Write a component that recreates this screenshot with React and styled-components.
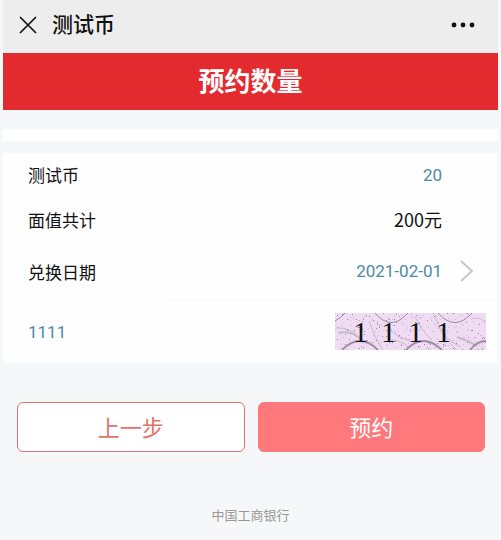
//react
import React, { useState } from 'react';
//css
import styled, { createGlobalStyle } from 'styled-components';

const DIGIT_X = [18, 46, 73, 101];

//captcha noise
const makeDots = (count) => {
  const dots = [];
  let seed = 11;
  const next = () => {
    seed = (seed * 16807) % 2147483647;
    return seed / 2147483647;
  };
  for (let i = 0; i < count; i++) {
    dots.push({ x: Math.floor(next() * 151), y: Math.floor(next() * 37), dark: next() > 0.65 });
  }
  return dots;
};
const dots = makeDots(280);

function Captcha() {
  return (
    <CaptchaSvg viewBox="0 0 151 37" role="img" aria-label="验证码">
      <rect width="151" height="37" fill="#f0dcf2" />
      {dots.map((d, i) => (
        <rect key={i} x={d.x} y={d.y} width="1" height="1" fill={d.dark ? '#9a82a8' : '#d3b3da'} />
      ))}
      <g fill="none" stroke="#c6bac9" strokeWidth="1">
        <path d="M2 15 Q14 14 24 24" />
        <path d="M4 20 Q16 17 27 27" strokeWidth="2" />
        <path d="M34 8 Q39 24 48 37" />
        <path d="M54 16 Q62 24 74 27" />
        <path d="M56 27 Q66 27 73 34" />
        <path d="M80 4 Q88 20 97 27" />
        <path d="M100 2 Q106 24 121 36" />
        <path d="M106 16 Q110 26 126 34" />
        <path d="M122 24 Q132 27 142 33" strokeWidth="2" />
        <path d="M137 5 Q145 4 151 9" />
      </g>
      <g fill="none" stroke="#9c8ca4" strokeWidth="1">
        <path d="M0 8 Q6 5 10 0" />
        <path d="M40 0 Q56 19 73 0" />
        <path d="M103 0 Q120 19 137 0" />
        <path d="M7 37 Q25 19 43 37" strokeWidth="2" />
        <path d="M71 37 Q88 19 107 37" strokeWidth="2" />
        <path d="M135 37 Q142 28 151 28" strokeWidth="2" />
      </g>
      <text x={DIGIT_X.join(' ')} y="29" fontFamily='"Liberation Serif", serif' fontSize="30" fill="#111">1111</text>
    </CaptchaSvg>
  );
}

export default function App() {
  const [count, setCount] = useState('20');
  const [code, setCode] = useState('1111');

  return (
    <>
      <GlobalStyle />
      <Wrapper>
        <Header>
          <IconButton type="button" aria-label="关闭">
            <svg width="18" height="18" viewBox="0 0 18 18" fill="none" stroke="#111" strokeWidth="1.7">
              <path d="M1 1L17 17M17 1L1 17" />
            </svg>
          </IconButton>
          <HeaderTitle>测试币</HeaderTitle>
          <IconButton type="button" aria-label="更多">
            <svg width="24" height="6" viewBox="0 0 24 6" fill="#111">
              <circle cx="3" cy="3" r="2.4" />
              <circle cx="12" cy="3" r="2.4" />
              <circle cx="21" cy="3" r="2.4" />
            </svg>
          </IconButton>
        </Header>
        <Banner>预约数量</Banner>
        <Strip />
        <Card>
          <Row $height={43}>
            <label htmlFor="count">测试币</label>
            <Input id="count" $right value={count} onChange={(e) => setCount(e.target.value)} />
          </Row>
          <Row $height={46}>
            <span>面值共计</span>
            <Total>200元</Total>
          </Row>
          <Row $height={58} $line>
            <span id="date">兑换日期</span>
            <DateButton type="button" aria-describedby="date">
              2021-02-01
              <svg width="14" height="22" viewBox="0 0 14 22" fill="none" stroke="#c8c8c8" strokeWidth="2">
                <path d="M1 1L12 11L1 21" />
              </svg>
            </DateButton>
          </Row>
          <Row $height={63} $wide>
            <Input aria-label="验证码" value={code} onChange={(e) => setCode(e.target.value)} />
            <Captcha />
          </Row>
        </Card>
        <Buttons>
          <Button type="button">上一步</Button>
          <Button type="button" $primary>预约</Button>
        </Buttons>
        <Footer>中国工商银行</Footer>
      </Wrapper>
    </>
  );
}

const GlobalStyle = createGlobalStyle`
  * { box-sizing: border-box; }
  body {
    margin: 0;
    background: #f5f7f8;
    font-family: Roboto, "Noto Sans CJK SC", sans-serif;
    color: #111;
  }
  button, input { font-family: inherit; }
`
//-------------------------------------------------
const Wrapper = styled.div`
  padding: 0 3px;
`
const Header = styled.header`
  display: flex;
  align-items: center;
  height: 53px;
  padding: 0 23px 4px 16px;
  background: #ededed;
`
const HeaderTitle = styled.span`
  flex: 1;
  margin-left: 15px;
  font-size: 21px;
  font-weight: 500;
  line-height: 30px;
`
const IconButton = styled.button`
  display: flex;
  padding: 0;
  border: none;
  background: none;
`
const Banner = styled.h1`
  margin: 0;
  padding-top: 2px;
  background: #e22a2f;
  color: #fff;
  font-size: 26px;
  line-height: 55px;
  text-align: center;
`
const Strip = styled.div`
  height: 12px;
  margin: 19px 0 12px;
  background: #fff;
`
const Card = styled.section`
  background: #fefefe;
`
const Row = styled.div`
  display: flex;
  align-items: center;
  justify-content: space-between;
  height: ${(props) => props.$height}px;
  padding: 0 ${(props) => (props.$wide ? 12 : 56)}px 0 25px;
  padding-right: ${(props) => props.$line && '24px'};
  background: ${(props) => props.$line && 'linear-gradient(#f7f7f7, #f7f7f7) right bottom / 67% 1px no-repeat'};
  font-family: "Noto Sans CJK SC", sans-serif;
  font-size: 17px;
`
const Total = styled.span`
  font-size: 18px;
`
const Input = styled.input`
  width: 120px;
  padding: 0;
  border: none;
  outline: none;
  background: none;
  font-family: Roboto, sans-serif;
  font-size: 17px;
  color: #4a8ba6;
  text-align: ${(props) => (props.$right ? 'right' : 'left')};
`
const DateButton = styled.button`
  display: flex;
  align-items: center;
  gap: 18px;
  padding: 0;
  border: none;
  background: none;
  font-family: Roboto, sans-serif;
  font-size: 17px;
  color: #4a8ba6;
`
const CaptchaSvg = styled.svg`
  width: 151px;
  height: 37px;
`
const Buttons = styled.div`
  display: grid;
  grid-template-columns: 1fr 1fr;
  gap: 13px;
  padding: 39px 13px 0 14px;
`
const Button = styled.button`
  height: 50px;
  padding: 0 0 3px;
  border: 1px solid ${(props) => (props.$primary ? '#ff787b' : '#d9736e')};
  border-radius: 6px;
  background: ${(props) => (props.$primary ? '#ff787b' : '#fff')};
  color: ${(props) => (props.$primary ? '#fff' : '#e0716b')};
  font-size: 22px;
`
const Footer = styled.footer`
  padding: 54px 0 14px;
  color: #999;
  font-size: 13px;
  line-height: 20px;
  text-align: center;
`
